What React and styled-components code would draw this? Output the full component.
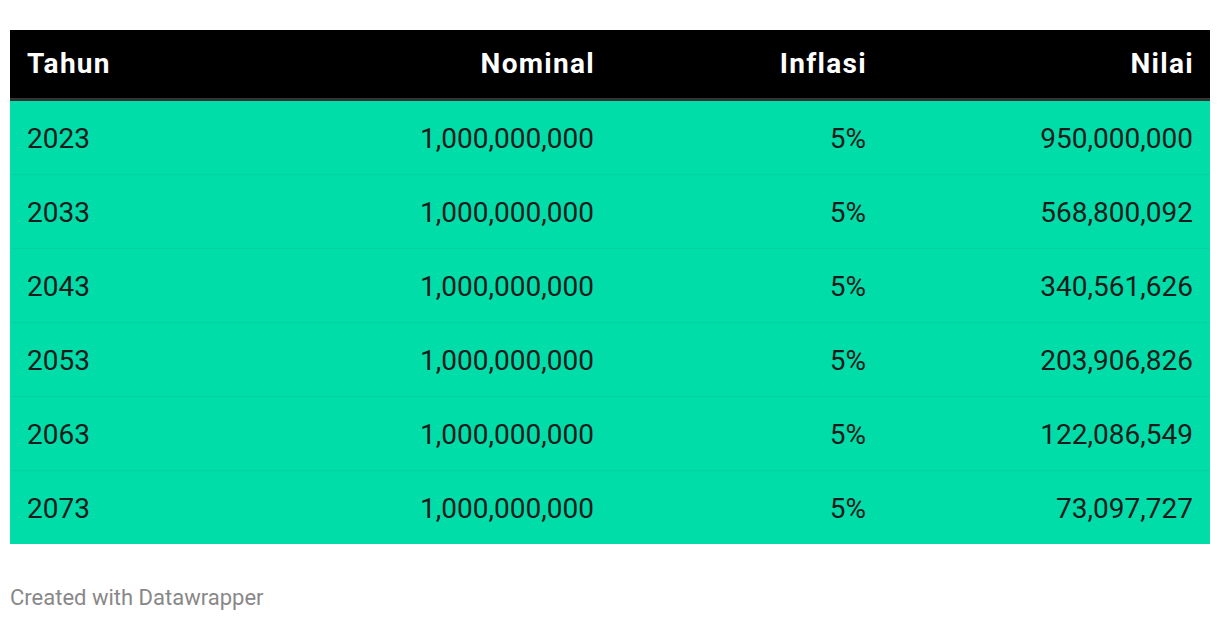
import React from 'react';
import styled, { createGlobalStyle } from 'styled-components';

const GlobalStyle = createGlobalStyle`
  body {
    margin: 0;
    background: #ffffff;
    font-family: Roboto, "Liberation Sans", sans-serif;
  }
`;

const Page = styled.div`
  padding: 30px 10px 0 10px;
`;

const Table = styled.div`
  display: grid;
  grid-template-columns: 250px 351px 272px 1fr;
`;

const HeadCell = styled.div`
  background: #000000;
  color: #ffffff;
  font-weight: 700;
  font-size: 28px;
  letter-spacing: 1.3px;
  height: 68px;
  display: flex;
  align-items: center;
  justify-content: ${(p) => (p.$right ? 'flex-end' : 'flex-start')};
  padding: 0 ${(p) => (p.$right ? '16px' : '17px')} 1px 17px;
  box-sizing: border-box;
  border-bottom: 3px solid #333333;
  height: 71px;
`;

const Cell = styled.div`
  background: #00dda9;
  color: #1b1b1b;
  font-size: 28px;
  height: 71px;
  display: flex;
  align-items: center;
  justify-content: ${(p) => (p.$right ? 'flex-end' : 'flex-start')};
  padding: 2px 17px 0 17px;
  border-bottom: ${(p) => (p.$last ? 'none' : '1px solid #00d2a1')};
`;

const Footer = styled.div`
  margin-top: 41px;
  color: #888888;
  font-size: 22px;
`;

const rows = [
  ['2023', '1,000,000,000', '5%', '950,000,000'],
  ['2033', '1,000,000,000', '5%', '568,800,092'],
  ['2043', '1,000,000,000', '5%', '340,561,626'],
  ['2053', '1,000,000,000', '5%', '203,906,826'],
  ['2063', '1,000,000,000', '5%', '122,086,549'],
  ['2073', '1,000,000,000', '5%', '73,097,727'],
];

const App = () => {
  return (
    <Page>
      <GlobalStyle />
      <Table>
        <HeadCell>Tahun</HeadCell>
        <HeadCell $right>Nominal</HeadCell>
        <HeadCell $right>Inflasi</HeadCell>
        <HeadCell $right>Nilai</HeadCell>
        {rows.map((r, i) =>
          r.map((v, j) => (
            <Cell key={i + '-' + j} $right={j > 0} $last={i === rows.length - 1}>
              {v}
            </Cell>
          ))
        )}
      </Table>
      <Footer>Created with Datawrapper</Footer>
    </Page>
  );
};

export default App;
